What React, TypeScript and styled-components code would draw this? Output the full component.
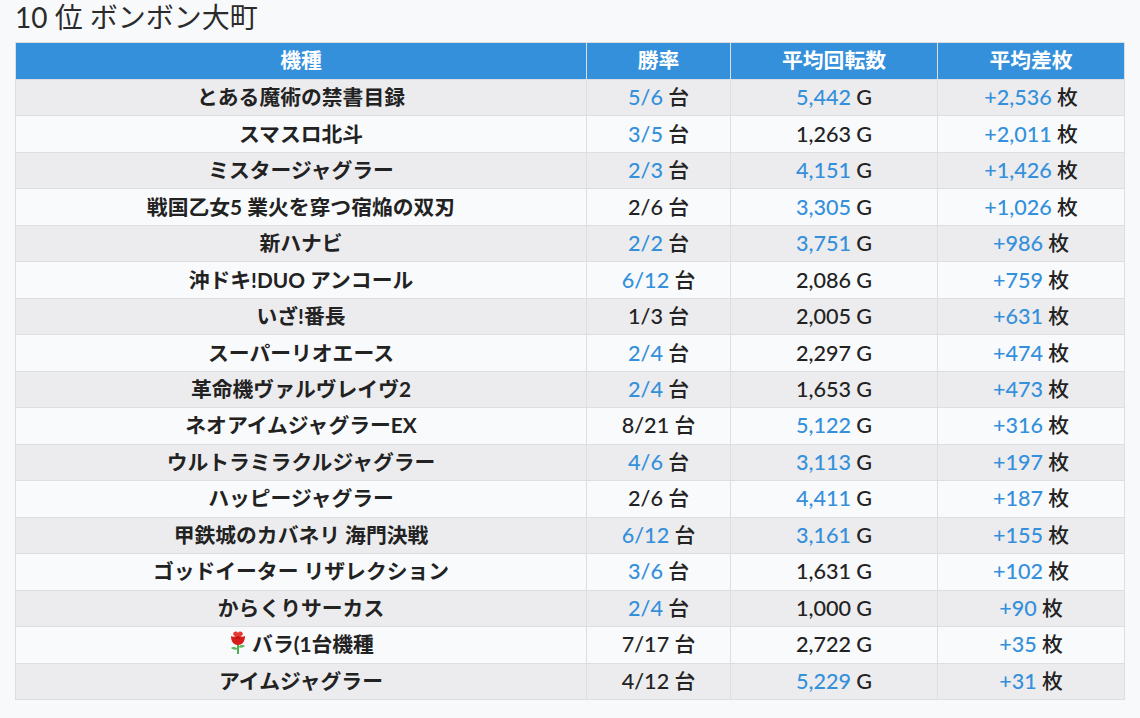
import styled, { createGlobalStyle } from "styled-components";

const GlobalStyle = createGlobalStyle`
  html, body {
    margin: 0;
    padding: 0;
    background: #f8f9fb;
  }
  body {
    font-family: Lato, "Noto Sans CJK JP", sans-serif;
    color: #222;
  }
`;

type Row = {
  name: string;
  rose?: boolean;
  win: string;
  winHot: boolean;
  spins: string;
  spinsHot: boolean;
  diff: string;
};

const rows: Row[] = [
  { name: "とある魔術の禁書目録", win: "5/6", winHot: true, spins: "5,442", spinsHot: true, diff: "+2,536" },
  { name: "スマスロ北斗", win: "3/5", winHot: true, spins: "1,263", spinsHot: false, diff: "+2,011" },
  { name: "ミスタージャグラー", win: "2/3", winHot: true, spins: "4,151", spinsHot: true, diff: "+1,426" },
  { name: "戦国乙女5 業火を穿つ宿焔の双刃", win: "2/6", winHot: false, spins: "3,305", spinsHot: true, diff: "+1,026" },
  { name: "新ハナビ", win: "2/2", winHot: true, spins: "3,751", spinsHot: true, diff: "+986" },
  { name: "沖ドキ!DUO アンコール", win: "6/12", winHot: true, spins: "2,086", spinsHot: false, diff: "+759" },
  { name: "いざ!番長", win: "1/3", winHot: false, spins: "2,005", spinsHot: false, diff: "+631" },
  { name: "スーパーリオエース", win: "2/4", winHot: true, spins: "2,297", spinsHot: false, diff: "+474" },
  { name: "革命機ヴァルヴレイヴ2", win: "2/4", winHot: true, spins: "1,653", spinsHot: false, diff: "+473" },
  { name: "ネオアイムジャグラーEX", win: "8/21", winHot: false, spins: "5,122", spinsHot: true, diff: "+316" },
  { name: "ウルトラミラクルジャグラー", win: "4/6", winHot: true, spins: "3,113", spinsHot: true, diff: "+197" },
  { name: "ハッピージャグラー", win: "2/6", winHot: false, spins: "4,411", spinsHot: true, diff: "+187" },
  { name: "甲鉄城のカバネリ 海門決戦", win: "6/12", winHot: true, spins: "3,161", spinsHot: true, diff: "+155" },
  { name: "ゴッドイーター リザレクション", win: "3/6", winHot: true, spins: "1,631", spinsHot: false, diff: "+102" },
  { name: "からくりサーカス", win: "2/4", winHot: true, spins: "1,000", spinsHot: false, diff: "+90" },
  { name: "バラ(1台機種", rose: true, win: "7/17", winHot: false, spins: "2,722", spinsHot: false, diff: "+35" },
  { name: "アイムジャグラー", win: "4/12", winHot: false, spins: "5,229", spinsHot: true, diff: "+31" },
];

const Page = styled.div`
  padding: 0 15px;
`;

const Title = styled.h2`
  margin: 0;
  height: 42px;
  font-size: 28px;
  line-height: 34px;
  font-weight: 400;
  color: #2b2b2b;
`;

const Table = styled.table`
  width: 1109px;
  border-collapse: collapse;
  table-layout: fixed;
  border: 1px solid #dcdee3;
`;

const HeadCell = styled.th<{ $w: number }>`
  width: ${(p) => p.$w}px;
  padding: 1.4px 0 3.4px;
  line-height: 31.2px;
  font-size: 20.8px;
  font-weight: 700;
  color: #fff;
  background: #3590dc;
  border: 1px solid #dcdee3;
  border-top: none;
  text-align: center;
`;

const BodyRow = styled.tr<{ $odd: boolean }>`
  background: ${(p) => (p.$odd ? "#ececee" : "#f9fafc")};
`;

const Cell = styled.td<{ $bold?: boolean }>`
  padding: 1.15px 0 3.15px;
  line-height: 31.2px;
  font-size: 20.8px;
  font-weight: ${(p) => (p.$bold ? 700 : 500)};
  text-align: center;
  white-space: nowrap;
  border: 1px solid #dcdee3;
`;

const Num = styled.span<{ $hot: boolean }>`
  font-family: "Lato Medium", Lato, "Noto Sans CJK JP", sans-serif;
  font-size: 21.6px;
  line-height: 1;
  color: ${(p) => (p.$hot ? "#3590dc" : "#222")};
`;

const Unit = styled.span`
  font-family: "Lato Medium", Lato, sans-serif;
  font-size: 21.6px;
  line-height: 1;
`;

const Rose = () => (
  <svg width="20" height="24" viewBox="0 0 20 24" style={{ verticalAlign: "-3px", marginRight: 4 }}>
    <path d="M10 13 L10 23" stroke="#4caf50" strokeWidth="2" />
    <path d="M10 18 C7 15 4 16 3 17 C5 19 8 19 10 18 Z" fill="#5cb85c" />
    <path d="M10 16 C13 13 16 14 17 15 C15 17 12 17 10 16 Z" fill="#5cb85c" />
    <path d="M3 5 C3 11 6 14 10 14 C14 14 17 11 17 5 C15 6 13 6 10 4 C7 6 5 6 3 5 Z" fill="#d81b1b" />
    <path d="M5 3 C6 0 9 0 10 2 C11 0 14 0 15 3 C14 5 12 6 10 5 C8 6 6 5 5 3 Z" fill="#e53935" />
    <path d="M8 8 C9 6 11 6 12 8" stroke="#a00f0f" strokeWidth="1" fill="none" />
  </svg>
);

export default function App() {
  return (
    <Page>
      <GlobalStyle />
      <Title>10 位 ボンボン大町</Title>
      <Table>
        <thead>
          <tr>
            <HeadCell $w={570}>機種</HeadCell>
            <HeadCell $w={143}>勝率</HeadCell>
            <HeadCell $w={206}>平均回転数</HeadCell>
            <HeadCell $w={186}>平均差枚</HeadCell>
          </tr>
        </thead>
        <tbody>
          {rows.map((r, i) => (
            <BodyRow key={r.name} $odd={i % 2 === 0}>
              <Cell $bold>
                {r.rose && <Rose />}
                {r.name}
              </Cell>
              <Cell>
                <Num $hot={r.winHot}>{r.win}</Num> 台
              </Cell>
              <Cell>
                <Num $hot={r.spinsHot}>{r.spins}</Num> <Unit>G</Unit>
              </Cell>
              <Cell>
                <Num $hot>{r.diff}</Num> 枚
              </Cell>
            </BodyRow>
          ))}
        </tbody>
      </Table>
    </Page>
  );
}
